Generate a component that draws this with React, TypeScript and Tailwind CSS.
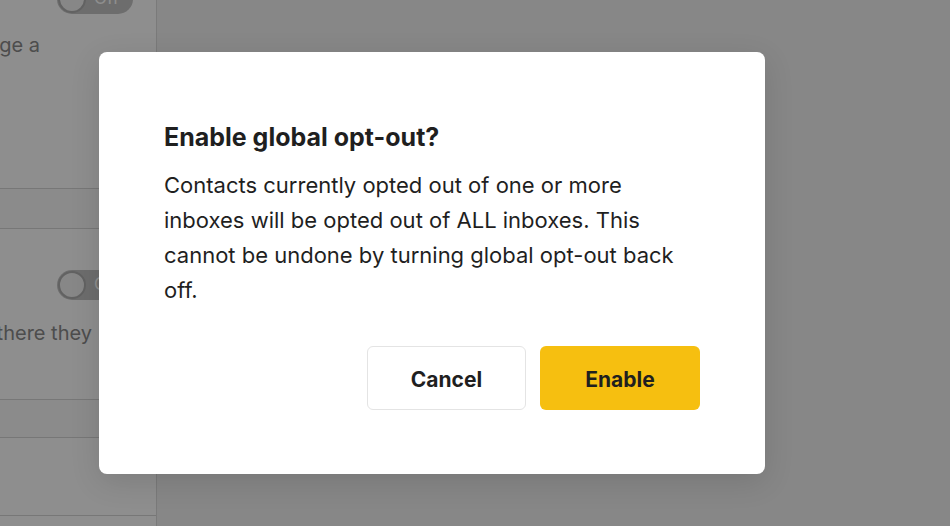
import React from "react";

function Toggle({ label }: { label: string }) {
  return (
    <div className="flex h-[30px] w-[76px] items-center rounded-full bg-[#c4c4c4] p-[1px]">
      <div className="h-[28px] w-[28px] rounded-full border-2 border-[#b0b0b0] bg-[#f2f2f2]" />
      <span className="ml-[8px] text-[17px] text-white">{label}</span>
    </div>
  );
}

// Settings text that is scrolled off the left edge of the panel
function Clipped({ children, width }: { children: React.ReactNode; width: string }) {
  return (
    <div className={`flex justify-end overflow-hidden whitespace-nowrap text-[20px] text-[#8a8a8a] ${width}`}>
      {children}
    </div>
  );
}

export default function App() {
  return (
    <div
      className="relative h-[526px] w-[950px] overflow-hidden bg-[#f3f3f3]"
      style={{ fontFamily: "Inter, 'Noto Sans', sans-serif" }}
    >
      {/* Settings panel behind the dialog */}
      <div className="flex h-full w-[157px] flex-col border-r border-[#dcdcdc] bg-white">
        <div className="flex h-[188px] flex-col">
          <div className="-mt-[16px] flex justify-start pl-[57px]">
            <Toggle label="Off" />
          </div>
          <div className="mt-[16px]">
            <Clipped width="w-[40px]">to change a</Clipped>
          </div>
        </div>
        <div className="h-[41px] border-y border-[#d6d6d6] bg-[#fafafa]" />
        <div className="flex h-[170px] flex-col">
          <div className="mt-[41px] pl-[57px]">
            <Toggle label="Off" />
          </div>
          <div className="mt-[18px]">
            <Clipped width="w-[92px]">there they</Clipped>
          </div>
        </div>
        <div className="h-[39px] border-y border-[#d6d6d6] bg-[#fafafa]" />
        <div className="h-[78px] border-b border-[#d6d6d6]" />
      </div>

      {/* Backdrop */}
      <div className="absolute inset-0 bg-black/[0.445]" />

      {/* Dialog */}
      <div className="absolute left-[99px] top-[52px] w-[666px] rounded-[8px] bg-white px-[65px] pb-[64px] pt-[71px] shadow-[0_8px_30px_rgba(0,0,0,0.12)]">
        <h2 className="text-[25px] font-bold leading-[28px] text-[#1f1f1f]">
          Enable global opt-out?
        </h2>
        <p className="mt-[17px] text-[22px] leading-[35px] text-[#1f1f1f]">
          Contacts currently opted out of one or more inboxes will be opted out of ALL inboxes. This
          cannot be undone by turning global opt-out back off.
        </p>
        <div className="mt-[38px] flex justify-end gap-[14px]">
          <button className="h-[64px] w-[159px] rounded-[6px] border border-[#e4e4e4] bg-white pt-[4px] text-[21px] font-bold text-[#1f1f1f]">
            Cancel
          </button>
          <button className="h-[64px] w-[160px] rounded-[6px] bg-[#f6bf10] pt-[4px] text-[21px] font-bold text-[#1f1f1f]">
            Enable
          </button>
        </div>
      </div>
    </div>
  );
}
